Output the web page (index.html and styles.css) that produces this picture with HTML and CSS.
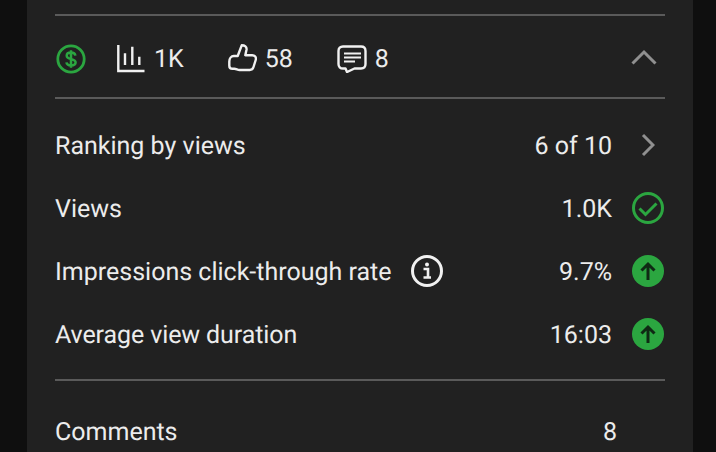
FILE: index.html
```html
<!DOCTYPE html>
<html lang="en">
<head>
  <meta charset="UTF-8" />
  <title>Video analytics</title>
  <link rel="stylesheet" href="styles.css">
</head>
<body>
<div class="card">
  <div class="stats">
    <svg class="icon-money" viewBox="0 0 30 30" fill="none">
      <circle cx="15" cy="15" r="13.200" stroke="#2ba640" stroke-width="2.800"/>
      <path d="M19.400 11.600c-.3-1.800-2-3-4.400-3-2.500 0-4.300 1.300-4.300 3.200 0 4.500 8.900 2.200 8.900 6.500 0 1.900-1.900 3.200-4.600 3.200-2.500 0-4.300-1.200-4.600-3.100M15 6.300v17.400" stroke="#2ba640" stroke-width="2.500"/>
    </svg>
    <div class="stat stat-views">
      <svg class="icon-bars" viewBox="0 0 28 28" fill="none" stroke="#f1f1f1" stroke-width="2.400">
        <path d="M1.300 0v26h26.200M8 8.300V20M15.300 1.700V20M22.300 11.700V20"/>
      </svg>
      <span>1K</span>
    </div>
    <div class="stat stat-likes">
      <svg class="icon-thumb" viewBox="0 0 29 28" fill="none" stroke="#f1f1f1" stroke-width="2.400" stroke-linejoin="round">
        <path d="M9.700 12 13.700 1.300c3 0 5.300 1.500 4.800 4.500l-1.200 5.400h6.900c2.800 0 4.300 2.300 3.500 4.800l-2.200 7c-.6 2-1.800 3-3.800 3H11.500c-2.200 0-3-1.200-5.200-1.200H4.500c-2 0-3.200-1.200-3.200-3.100v-4.200c0-3 1.800-5.500 4.500-5.500h3.900z"/>
      </svg>
      <span>58</span>
    </div>
    <div class="stat stat-comments">
      <svg class="icon-comment" viewBox="0 0 30 28" fill="none" stroke="#f1f1f1" stroke-width="2.400" stroke-linejoin="round">
        <path d="M6 1.500h18c2.800 0 4.500 1.700 4.500 4.500v13c0 2.800-1.700 4.500-4.500 4.500h-6.500l-7.500 3.500-1.500-3.500H6c-2.800 0-4.500-1.700-4.500-4.500V6c0-2.800 1.700-4.500 4.500-4.500z"/>
        <path d="M7 8.500h17M7 12.500h17M7 16.500h11" stroke-width="1.800"/>
      </svg>
      <span>8</span>
    </div>
    <svg class="icon-chevron-up" viewBox="0 0 26 16" fill="none" stroke="#909090" stroke-width="3">
      <path d="M1.500 14.500 13 3l11.500 11.500"/>
    </svg>
  </div>

  <div class="metrics">
    <div class="metric">
      <span class="label">Ranking by views</span>
      <span class="value">6 of 10</span>
      <span class="slot">
        <svg class="icon-chevron-right" viewBox="0 0 14 24" fill="none" stroke="#909090" stroke-width="3">
          <path d="M2 2l10 10L2 22"/>
        </svg>
      </span>
    </div>
    <div class="metric">
      <span class="label">Views</span>
      <span class="value">1.0K</span>
      <span class="slot">
        <svg class="icon-badge" viewBox="0 0 32 32" fill="none" stroke="#2ba640">
          <circle cx="16" cy="16" r="14.500" stroke-width="3"/>
          <path d="M7.500 16.500l6 6 11-11" stroke-width="3"/>
        </svg>
      </span>
    </div>
    <div class="metric">
      <span class="label">Impressions click-through rate</span>
      <svg class="icon-info" viewBox="0 0 32 32" fill="none">
        <circle cx="16" cy="16" r="14.500" stroke="#f1f1f1" stroke-width="3"/>
        <circle cx="16" cy="9.500" r="2" fill="#f1f1f1"/>
        <path d="M12.500 14h4.500v8M12.500 22.500h7.500" stroke="#f1f1f1" stroke-width="2.600"/>
      </svg>
      <span class="value">9.7%</span>
      <span class="slot">
        <svg class="icon-badge" viewBox="0 0 32 32" fill="none">
          <circle cx="16" cy="16" r="16" fill="#2ba640"/>
          <path d="M16 25V9M9.500 15.500 16 9l6.500 6.500" stroke="#0f2a14" stroke-width="3"/>
        </svg>
      </span>
    </div>
    <div class="metric">
      <span class="label label-tight">Average view duration</span>
      <span class="value">16:03</span>
      <span class="slot">
        <svg class="icon-badge" viewBox="0 0 32 32" fill="none">
          <circle cx="16" cy="16" r="16" fill="#2ba640"/>
          <path d="M16 25V9M9.500 15.500 16 9l6.500 6.500" stroke="#0f2a14" stroke-width="3"/>
        </svg>
      </span>
    </div>
  </div>

  <div class="totals">
    <span class="label">Comments</span>
    <span class="total-value">8</span>
  </div>
</div>
</body>
</html>
```

FILE: styles.css
```css
html, body {
  margin: 0;
  padding: 0;
  height: 100%;
  overflow: hidden;
  background: #0f0f0f;
  font-family: Roboto, "Liberation Sans", sans-serif;
  font-size: 25px;
  color: #ececec;
  text-rendering: geometricPrecision;
}
.card {
  margin: 0 23px 0 27px;
  padding: 14px 28px 0;
  height: 452px;
  box-sizing: border-box;
  background: #212121;
}
.stats {
  display: flex;
  align-items: center;
  padding-top: 4px;
  height: 77px;
  border-top: 2px solid #5a5a5a;
  border-bottom: 2px solid #5a5a5a;
}
.stat {
  display: flex;
  align-items: center;
}
.stat span { margin-top: 2px; }
.icon-money { width: 30px; height: 30px; margin-left: 1px; }
.stat-views { margin-left: 31px; gap: 9px; }
.stat-likes { margin-left: 45px; gap: 8px; }
.stat-comments { margin-left: 44px; gap: 8px; }
.icon-bars { width: 28px; height: 28px; }
.icon-thumb { width: 29px; height: 28px; margin-left: -1px; margin-bottom: 2px; }
.icon-comment { width: 30px; height: 28px; }
.icon-chevron-up { width: 26px; height: 16px; margin-left: auto; margin-right: 8px; margin-bottom: 4px; }
.metrics {
  padding: 16px 0 12px;
  border-bottom: 2px solid #5a5a5a;
}
.metric {
  display: flex;
  align-items: center;
  height: 63px;
}
.label-tight { letter-spacing: -0.1px; }
.icon-info { width: 32px; height: 32px; margin-left: 20px; margin-bottom: 4px; }
.value { margin-left: auto; }
.slot {
  display: flex;
  justify-content: center;
  width: 32px;
  margin-left: 20px;
  margin-right: 1px;
  margin-bottom: 4px;
}
.icon-badge { width: 32px; height: 32px; }
.icon-chevron-right { width: 14px; height: 24px; }
.totals {
  display: flex;
  justify-content: space-between;
  align-items: center;
  margin-top: 20px;
  height: 63px;
}
.total-value { margin-right: 48px; }
```
